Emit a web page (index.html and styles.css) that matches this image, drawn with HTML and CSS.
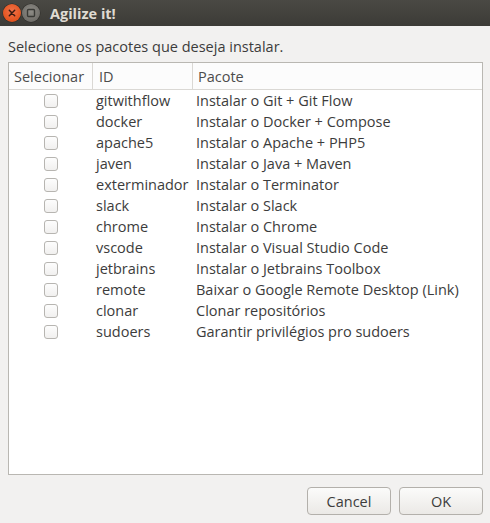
FILE: index.html
```html
<!DOCTYPE html>
<html>
<head>
<meta charset="utf-8">
<link rel="stylesheet" href="styles.css">
</head>
<body>
<div class="window">
  <div class="titlebar">
    <div class="wbtn close">
      <svg width="18" height="18" viewBox="0 0 18 18"><path d="M6.3 6.3 L11.7 11.7 M11.7 6.3 L6.3 11.7" stroke="#3a1a10" stroke-width="1.5" stroke-linecap="round"/></svg>
    </div>
    <div class="wbtn max">
      <svg width="18" height="18" viewBox="0 0 18 18"><rect x="5.5" y="5.5" width="7" height="7" rx="1" fill="none" stroke="#3a3a36" stroke-width="1.4"/></svg>
    </div>
    <div class="title">Agilize it!</div>
  </div>
  <div class="content">
    <div class="prompt">Selecione os pacotes que deseja instalar.</div>
    <div class="tree">
      <div class="row head">
        <div class="c1">Selecionar</div>
        <div class="c2">ID</div>
        <div class="c3">Pacote</div>
      </div>
      <div class="body">
        <div class="row"><div class="c1"><span class="cb"></span></div><div class="c2">gitwithflow</div><div class="c3">Instalar o Git + Git Flow</div></div>
        <div class="row"><div class="c1"><span class="cb"></span></div><div class="c2">docker</div><div class="c3">Instalar o Docker + Compose</div></div>
        <div class="row"><div class="c1"><span class="cb"></span></div><div class="c2">apache5</div><div class="c3">Instalar o Apache + PHP5</div></div>
        <div class="row"><div class="c1"><span class="cb"></span></div><div class="c2">javen</div><div class="c3">Instalar o Java + Maven</div></div>
        <div class="row"><div class="c1"><span class="cb"></span></div><div class="c2">exterminador</div><div class="c3">Instalar o Terminator</div></div>
        <div class="row"><div class="c1"><span class="cb"></span></div><div class="c2">slack</div><div class="c3">Instalar o Slack</div></div>
        <div class="row"><div class="c1"><span class="cb"></span></div><div class="c2">chrome</div><div class="c3">Instalar o Chrome</div></div>
        <div class="row"><div class="c1"><span class="cb"></span></div><div class="c2">vscode</div><div class="c3">Instalar o Visual Studio Code</div></div>
        <div class="row"><div class="c1"><span class="cb"></span></div><div class="c2">jetbrains</div><div class="c3">Instalar o Jetbrains Toolbox</div></div>
        <div class="row"><div class="c1"><span class="cb"></span></div><div class="c2">remote</div><div class="c3">Baixar o Google Remote Desktop (Link)</div></div>
        <div class="row"><div class="c1"><span class="cb"></span></div><div class="c2">clonar</div><div class="c3">Clonar repositórios</div></div>
        <div class="row"><div class="c1"><span class="cb"></span></div><div class="c2">sudoers</div><div class="c3">Garantir privilégios pro sudoers</div></div>
      </div>
    </div>
    <div class="buttons">
      <button class="btn">Cancel</button>
      <button class="btn">OK</button>
    </div>
  </div>
</div>
</body>
</html>
```
FILE: styles.css
```css
* { box-sizing: border-box; }
html, body {
  margin: 0;
  padding: 0;
  width: 490px;
  height: 523px;
  overflow: hidden;
  background: #f2f1f0;
}
body {
  font-family: "Open Sans", "DejaVu Sans", sans-serif;
  font-size: 14.5px;
  color: #3c3c3c;
}
.window {
  display: flex;
  flex-direction: column;
  height: 523px;
}
.titlebar {
  height: 26px;
  flex: none;
  background: linear-gradient(#4a4944, #3c3b37);
  display: flex;
  align-items: center;
  padding-left: 3px;
}
.wbtn {
  width: 18px;
  height: 18px;
  border-radius: 50%;
  margin-right: 1px;
  display: flex;
}
.close {
  background: radial-gradient(circle at 50% 40%, #f2734a, #e2531e 70%, #c3461a);
  box-shadow: 0 0 0 0.5px #2c2b28;
}
.max {
  background: radial-gradient(circle at 50% 40%, #8e8c86, #6f6d68 75%, #5b5a55);
  box-shadow: 0 0 0 0.5px #2c2b28;
}
.title {
  margin-left: 9px;
  color: #dfdbd2;
  font-weight: bold;
  font-size: 14.5px;
  letter-spacing: 0;
}
.content {
  flex: 1;
  display: flex;
  flex-direction: column;
  padding: 11px 7px 10px 8px;
}
.prompt {
  height: 25px;
  line-height: 19px;
}
.tree {
  height: 413px;
  background: #fff;
  border: 1px solid #b9b7b2;
  display: flex;
  flex-direction: column;
}
.row {
  display: grid;
  grid-template-columns: 84px 100px 1fr;
  height: 21px;
  align-items: center;
  white-space: nowrap;
}
.row.head {
  height: 27px;
  background: #fcfcfc;
  border-bottom: 1px solid #dad8d4;
  color: #4c4c4c;
}
.head .c1, .head .c2, .head .c3 {
  height: 100%;
  display: flex;
  align-items: center;
  padding-left: 5px;
}
.head .c1, .head .c2 {
  border-right: 1px solid #dad8d4;
}
.head .c2 { padding-left: 6px; }
.body .c1 {
  display: flex;
  justify-content: center;
}
.body .c2 {
  padding-left: 3px;
}
.body .c3 {
  padding-left: 3px;
}
.cb {
  width: 14px;
  height: 14px;
  border: 1px solid #b7b5b1;
  border-radius: 3px;
  background: linear-gradient(#fdfdfd, #f1f0ef);
}
.buttons {
  display: flex;
  justify-content: flex-end;
  gap: 8px;
  margin-top: 12px;
}
.btn {
  width: 84px;
  height: 28px;
  font-family: inherit;
  font-size: 14.5px;
  color: #3c3c3c;
  background: linear-gradient(#fbfbfa, #ebe9e6);
  border: 1px solid #b3b0ab;
  border-radius: 4px;
  padding: 0;
}
```
